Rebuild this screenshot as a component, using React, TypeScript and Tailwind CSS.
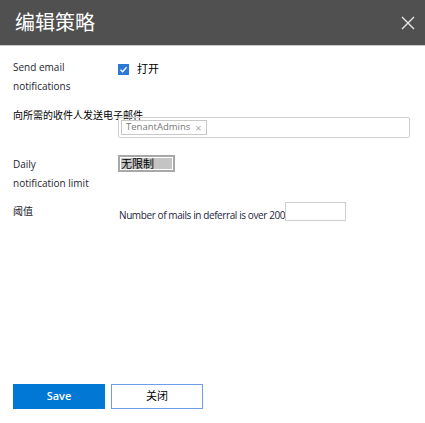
import React from 'react';

const CheckIcon = () => (
  <svg width="11" height="11" viewBox="0 0 11 11">
    <rect width="11" height="11" fill="#2b79d6" />
    <path d="M2.5 5.8 L4.6 7.8 L8.6 3.2" stroke="#fff" strokeWidth="1.3" fill="none" />
  </svg>
);

const App: React.FC = () => {
  const font = { fontFamily: '"Open Sans", "Noto Sans CJK SC", sans-serif' };

  return (
    <div className="w-[425px] h-[423px] bg-white flex flex-col" style={font}>
      {/* Header */}
      <div className="h-[46px] bg-[#505050] border-b border-[#c8c8c8] flex items-center justify-between pl-[15px] pr-[9px] shrink-0">
        <span className="text-[20px] text-white">编辑策略</span>
        <svg width="14" height="14" viewBox="0 0 14 14" className="mr-[1px]">
          <path d="M1 1 L13 13 M13 1 L1 13" stroke="#e8e8e8" strokeWidth="1.4" />
        </svg>
      </div>

      {/* Body */}
      <div className="flex-1 flex flex-col pl-[13px] text-[10px] text-[#1e1e2e]">
        {/* Send email notifications */}
        <div className="flex mt-[12px]">
          <div className="w-[105px] leading-[19px]">
            <div>Send email</div>
            <div>notifications</div>
          </div>
          <div className="flex items-center gap-[8px] h-[19px] mt-[2px]">
            <CheckIcon />
            <span className="text-[11px] text-black">打开</span>
          </div>
        </div>

        {/* Recipients */}
        <div className="mt-[12px] leading-[14px] text-[10px] text-black">向所需的收件人发送电子邮件</div>
        <div className="ml-[105px] -mt-[5px] w-[292px] h-[21px] border border-[#d0d0d0] rounded-[2px] flex items-center px-[2px]">
          <span className="h-[15px] border border-[#c8c8c8] flex items-center px-[4px] text-[9.5px] text-[#777] gap-[5px]">
            TenantAdmins
            <span className="text-[11px] text-[#aaa] leading-none">×</span>
          </span>
        </div>

        {/* Daily limit */}
        <div className="flex mt-[17px]">
          <div className="w-[105px] leading-[19px]">
            <div>Daily</div>
            <div>notification limit</div>
          </div>
          <div className="w-[57px] h-[17px] border-2 border-[#a8a8a8] flex items-center px-[1px]">
            <span className="w-full bg-[#c4c4c4] text-[11px] text-black leading-[11px]">无限制</span>
          </div>
        </div>

        {/* Threshold */}
        <div className="flex mt-[9px]">
          <div className="w-[106px] leading-[19px]">阈值</div>
          <div className="flex items-end">
            <span className="text-[10px] tracking-[-0.4px] leading-[12px] text-[#1e1e3e]">Number of mails in deferral is over 200</span>
            <div className="w-[61px] h-[19px] border border-[#cfcfcf]" />
          </div>
        </div>

        <div className="flex-1" />

        {/* Buttons */}
        <div className="flex gap-[6px] mb-[14px]">
          <button className="w-[92px] h-[25px] bg-[#0078d4] text-white text-[11px] font-semibold">Save</button>
          <button className="w-[92px] h-[25px] bg-white border border-[#6e9ee8] text-black text-[11px]">关闭</button>
        </div>
      </div>
    </div>
  );
};

export default App;
